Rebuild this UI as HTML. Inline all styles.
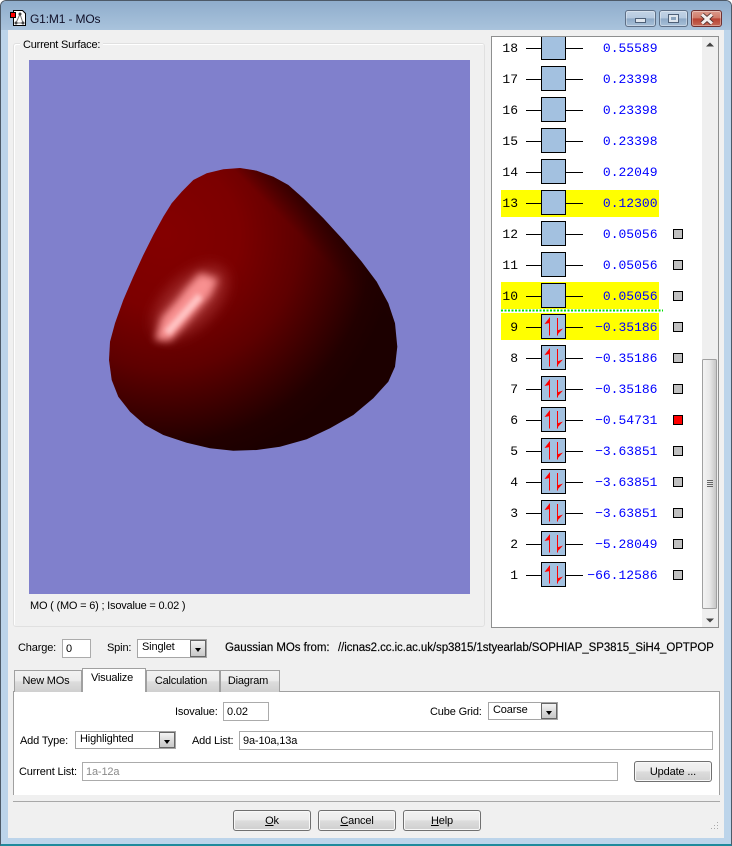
<!DOCTYPE html>
<html><head><meta charset="utf-8"><title>G1:M1 - MOs</title>
<style>
html,body{margin:0;padding:0}
body{width:732px;height:846px;overflow:hidden;position:relative;font:11px "Liberation Sans",sans-serif;letter-spacing:-.15px;color:#000;background:#fff}
.a,.t{position:absolute}
.t{white-space:nowrap;line-height:14px}
.in{position:absolute;box-sizing:border-box;background:#fff;border:1px solid #ababab;padding:2px 0 0 3px;line-height:14px;white-space:nowrap}
.cb{position:absolute;box-sizing:border-box;background:#fff;border:1px solid #a5a5a5;padding:0 0 0 4px;line-height:14px;white-space:nowrap}
.cb i{position:absolute;right:0;top:0;bottom:0;width:16px;background:linear-gradient(#f4f4f4,#dcdcdc 50%,#c8c8c8);border:1px solid #666;box-sizing:border-box}
.cb i:after{content:"";position:absolute;left:3.500px;top:7px;border:3.500px solid transparent;border-top:4px solid #000;border-bottom:0}
.btn{position:absolute;box-sizing:border-box;border:1px solid #707070;border-radius:3px;background:linear-gradient(#f2f2f2,#ebebeb 48%,#dddddd 50%,#cfcfcf);text-align:center;line-height:20px;box-shadow:inset 0 0 0 1px #f8f8f8}
.tab{position:absolute;box-sizing:border-box;border:1px solid #a0a0a0;border-bottom:0;background:linear-gradient(#f2f2f2,#ebebeb 48%,#dddddd 50%,#cfcfcf);text-align:center;line-height:21px;padding-right:4px;letter-spacing:-.2px}
.wb{position:absolute;box-sizing:border-box;border:1px solid #5e6f86;border-radius:3px;top:10px;height:17px;box-shadow:inset 0 0 0 1px rgba(255,255,255,.35);background:linear-gradient(#c2d3e6,#b5c9df 48%,#8ca8c6 50%,#a8c0d8)}
</style></head>
<body>
<!-- frame -->
<div class="a" style="left:0;top:0;width:732px;height:846px;box-sizing:border-box;border:1px solid #4d5a68;border-bottom:2px solid #1f8a9c;border-radius:6px 6px 0 0;background:#bcd4ea"></div>
<div class="a" style="left:1px;top:1px;width:730px;height:29px;border-radius:5px 5px 0 0;background:linear-gradient(#8fadcc,#a9c3dc)"></div>
<!-- client -->
<div class="a" style="left:8px;top:30px;width:716px;height:808px;background:#f0f0f0"></div>
<!-- title icon -->
<svg class="a" style="left:9px;top:9px" width="18" height="18" viewBox="0 0 18 18">
<path d="M4.500 1.500H13.500L16.500 4.500V16.500H4.500Z" fill="#fff" stroke="#000"/>
<path d="M11 5L7 14M11 5L14 14M7 14H14" stroke="#777"/>
<circle cx="11" cy="5" r="1.500" fill="#444"/><circle cx="7" cy="14" r="1.500" fill="#444"/><circle cx="14" cy="14" r="1.500" fill="#444"/>
<rect x="1.500" y="3.500" width="5" height="5" fill="#f00" stroke="#000"/>
</svg>
<div class="t" style="left:30px;top:12px;font-size:12px;color:#101028">G1:M1 - MOs</div>
<!-- window buttons -->
<div class="wb" style="left:625px;width:31px"><div class="a" style="left:9px;top:7px;width:11px;height:5px;background:#dfe6ee;border:1px solid #4e6078;box-sizing:border-box"></div></div>
<div class="wb" style="left:659px;width:29px"><div class="a" style="left:8px;top:3px;width:11px;height:9px;border:1px solid #4e6078;box-sizing:border-box;background:#dfe6ee"><div style="margin:2px;height:3px;background:#8aa3bd"></div></div></div>
<div class="wb" style="left:691px;width:31px;border-color:#6e3030;background:linear-gradient(#dc9a8c,#d07a68 48%,#b84030 50%,#c46a58)">
<svg class="a" style="left:8px;top:2px" width="14" height="12"><path d="M2 1.500L12 10.500M12 1.500L2 10.500" stroke="#4a2a28" stroke-width="4.600"/><path d="M2 1.500L12 10.500M12 1.500L2 10.500" stroke="#f4efee" stroke-width="3"/></svg></div>

<!-- group box -->
<div class="a" style="left:13px;top:43px;width:472px;height:584px;box-sizing:border-box;border:1px solid #e0e0e0;border-radius:3px;box-shadow:inset 1px 1px 0 #fff"></div>
<div class="t" style="left:20px;top:38px;background:#f0f0f0;padding:0 3px;letter-spacing:-.22px">Current Surface:</div>
<!-- 3D -->
<svg class="a" style="left:29px;top:60px" width="441" height="534" viewBox="29 60 441 534">
<defs>
<radialGradient id="g" gradientUnits="userSpaceOnUse" cx="165" cy="235" r="232">
<stop offset="0" stop-color="#840000"/><stop offset=".32" stop-color="#7c0000"/><stop offset=".58" stop-color="#5e0000"/><stop offset=".72" stop-color="#440000"/><stop offset=".9" stop-color="#220000"/><stop offset="1" stop-color="#1c0000"/>
</radialGradient>
<linearGradient id="e" gradientUnits="userSpaceOnUse" x1="272" y1="208" x2="297.500" y2="182.500">
<stop offset="0" stop-color="#200000" stop-opacity="0"/><stop offset="1" stop-color="#200000" stop-opacity=".85"/>
</linearGradient>
<filter id="b1" x="-50%" y="-50%" width="200%" height="200%"><feGaussianBlur stdDeviation="7"/></filter>
<filter id="b2" x="-50%" y="-50%" width="200%" height="200%"><feGaussianBlur stdDeviation="4"/></filter>
<filter id="b3" x="-50%" y="-50%" width="200%" height="200%"><feGaussianBlur stdDeviation="2.500"/></filter>
<clipPath id="c"><polygon points="240,168 223.300,169.300 206.700,173.300 193.300,180 181.700,191.700 171.700,203.300 163.300,216.700 153.300,235 143.300,255 133.300,276.700 123.300,300 115,323.300 110,341.700 109,360 111.700,380 118.300,396.700 130,411.700 145,425 163.300,435 186.700,442.700 210,448.300 233.300,450.700 256.700,450 280,446.700 306.700,439.300 330,428.300 353.300,415 373.300,398.300 388.300,381.700 395,366.700 397.300,346.700 395,323.300 388.300,303.300 376.700,281.700 361.700,261.700 343.300,240 323.300,218.300 303.300,198.300 288.300,185 273.300,176.700 256.700,170.700"/></clipPath>
</defs>
<rect x="29" y="60" width="441" height="534" fill="#8080cc"/>
<g clip-path="url(#c)">
<rect x="100" y="160" width="310" height="300" fill="url(#g)"/>
<rect x="100" y="160" width="310" height="300" fill="url(#e)"/>
<ellipse cx="190" cy="302" rx="46" ry="24" transform="rotate(-44 190 302)" fill="#b84848" opacity=".55" filter="url(#b1)"/>
<polygon points="155,340 162,317 177,300 187,287 200,273 218,279 211,295 198,310 183,327 170,341" fill="#f89090" filter="url(#b2)"/>
<path d="M167 333L200 296" stroke="#ffc4c4" stroke-width="7" filter="url(#b3)"/>
</g>
</svg>
<div class="t" style="left:30px;top:599px;letter-spacing:-.2px">MO ( (MO = 6) ; Isovalue = 0.02 )</div>

<!-- MO list -->
<svg class="a" style="left:491px;top:36px;letter-spacing:0" width="228" height="593" viewBox="491 36 228 593" font-family="Liberation Mono, monospace" font-size="13">
<defs>
<g id="l"><path d="M526 0.500H541M566 0.500H583" stroke="#000"/><rect x="541.500" y="-12.500" width="24" height="24" fill="#a3c1e0" stroke="#000"/></g>
<g id="o"><use href="#l"/><path d="M549.500 -9V8.500M557.500 -9V8.500" stroke="#f00"/><path d="M550 -10L544.500 -3L550 -4ZM557 8L563 1.500L557 3.500Z" fill="#f00"/></g>
<rect id="s" x="673.500" y="-4.500" width="9" height="9" fill="#c0c0c0" stroke="#000"/>
</defs>
<rect x="491.500" y="36.500" width="227" height="591" fill="#fff" stroke="#8e8f8f"/>
<rect x="501" y="190" width="158" height="27" fill="#ff0"/>
<rect x="501" y="282" width="158" height="27" fill="#ff0"/>
<rect x="501" y="313" width="158" height="27" fill="#ff0"/>
<clipPath id="lc"><rect x="492" y="37" width="210" height="590"/></clipPath>
<g clip-path="url(#lc)">
<use href="#l" y="48"/><use href="#l" y="79"/><use href="#l" y="110"/><use href="#l" y="141"/><use href="#l" y="172"/><use href="#l" y="203"/><use href="#l" y="234"/><use href="#l" y="265"/><use href="#l" y="296"/>
<use href="#o" y="327"/><use href="#o" y="358"/><use href="#o" y="389"/><use href="#o" y="420"/><use href="#o" y="451"/><use href="#o" y="482"/><use href="#o" y="513"/><use href="#o" y="544"/><use href="#o" y="575"/>
</g>
<path d="M501 310.500H663" stroke="#00e000" stroke-width="2" stroke-dasharray="2 1.500"/>
<g text-anchor="end" fill="#000">
<text x="518" y="52">18</text><text x="518" y="83">17</text><text x="518" y="114">16</text><text x="518" y="145">15</text><text x="518" y="176">14</text><text x="518" y="207">13</text><text x="518" y="238">12</text><text x="518" y="269">11</text><text x="518" y="300">10</text><text x="518" y="331">9</text><text x="518" y="362">8</text><text x="518" y="393">7</text><text x="518" y="424">6</text><text x="518" y="455">5</text><text x="518" y="486">4</text><text x="518" y="517">3</text><text x="518" y="548">2</text><text x="518" y="579">1</text>
</g>
<g text-anchor="end" fill="#0000ff">
<text x="657.500" y="52">0.55589</text><text x="657.500" y="83">0.23398</text><text x="657.500" y="114">0.23398</text><text x="657.500" y="145">0.23398</text><text x="657.500" y="176">0.22049</text><text x="657.500" y="207">0.12300</text><text x="657.500" y="238">0.05056</text><text x="657.500" y="269">0.05056</text><text x="657.500" y="300">0.05056</text><text x="657.500" y="331">−0.35186</text><text x="657.500" y="362">−0.35186</text><text x="657.500" y="393">−0.35186</text><text x="657.500" y="424">−0.54731</text><text x="657.500" y="455">−3.63851</text><text x="657.500" y="486">−3.63851</text><text x="657.500" y="517">−3.63851</text><text x="657.500" y="548">−5.28049</text><text x="657.500" y="579">−66.12586</text>
</g>
<use href="#s" y="234"/><use href="#s" y="265"/><use href="#s" y="296"/><use href="#s" y="327"/><use href="#s" y="358"/><use href="#s" y="389"/>
<rect x="673.500" y="415.500" width="9" height="9" fill="#f00" stroke="#000"/>
<use href="#s" y="451"/><use href="#s" y="482"/><use href="#s" y="513"/><use href="#s" y="544"/><use href="#s" y="575"/>
<!-- scrollbar -->
<rect x="702" y="37" width="16" height="590" fill="#efefef"/>
<path d="M706 46.500L710 42.500L714 46.500Z" fill="#444"/>
<path d="M706 618.500L714 618.500L710 622.500Z" fill="#444"/>
<linearGradient id="sb"><stop offset="0" stop-color="#f4f4f4"/><stop offset=".5" stop-color="#e8e8e8"/><stop offset="1" stop-color="#c4c4c4"/></linearGradient>
<rect x="702.500" y="359.500" width="14" height="249" fill="url(#sb)" stroke="#a0a0a0" rx="1"/>
<path d="M707 480.500H713M707 482.500H713M707 484.500H713M707 486.500H713" stroke="#666"/>
</svg>

<!-- charge row -->
<div class="t" style="left:18px;top:641px">Charge:</div>
<div class="in" style="left:62px;top:639px;width:29px;height:19px">0</div>
<div class="t" style="left:107px;top:641px">Spin:</div>
<div class="cb" style="left:137px;top:639px;width:70px;height:19px;">Singlet<i></i></div>
<div class="t" style="left:225px;top:641px;font-size:11.500px;-webkit-text-stroke:.15px #000;letter-spacing:-.05px">Gaussian MOs from:</div>
<div class="t" style="left:338px;top:641px;font-size:11.500px;-webkit-text-stroke:.15px #000;letter-spacing:-.08px">//icnas2.cc.ic.ac.uk/sp3815/1styearlab/SOPHIAP_SP3815_SiH4_OPTPOP</div>

<!-- tabs -->
<div class="a" style="left:13px;top:691px;width:707px;height:104px;background:#fff;border:1px solid #a0a0a0;border-bottom:0;box-sizing:border-box"></div>
<div class="tab" style="left:14px;top:670px;width:68px;height:22px">New MOs</div>
<div class="tab" style="left:146px;top:670px;width:74px;height:22px">Calculation</div>
<div class="tab" style="left:220px;top:670px;width:60px;height:22px">Diagram</div>
<div class="tab" style="left:82px;top:668px;width:64px;height:24px;background:#fff;line-height:19px">Visualize</div>

<div class="t" style="left:175px;top:705px">Isovalue:</div>
<div class="in" style="left:223px;top:702px;width:46px;height:19px">0.02</div>
<div class="t" style="left:430px;top:705px">Cube Grid:</div>
<div class="cb" style="left:488px;top:702px;width:70px;height:18px">Coarse<i></i></div>
<div class="t" style="left:20px;top:734px">Add Type:</div>
<div class="cb" style="left:75px;top:731px;width:101px;height:18px">Highlighted<i></i></div>
<div class="t" style="left:192px;top:734px">Add List:</div>
<div class="in" style="left:239px;top:731px;width:474px;height:19px">9a-10a,13a</div>
<div class="t" style="left:19px;top:765px">Current List:</div>
<div class="in" style="left:82px;top:762px;width:536px;height:19px;color:#8a8a8a">1a-12a</div>
<div class="btn" style="left:634px;top:761px;width:78px;height:21px">Update ...</div>

<!-- bottom -->
<div class="a" style="left:13px;top:801px;width:707px;height:1px;background:#a8a8a8"></div>
<div class="btn" style="left:233px;top:810px;width:78px;height:21px"><u>O</u>k</div>
<div class="btn" style="left:318px;top:810px;width:78px;height:21px"><u>C</u>ancel</div>
<div class="btn" style="left:403px;top:810px;width:78px;height:21px"><u>H</u>elp</div>
<svg class="a" style="left:708px;top:820px" width="12" height="12"><path d="M9 2h1v1H9zM6 5h1v1H6zM9 5h1v1H9zM3 8h1v1H3zM6 8h1v1H6zM9 8h1v1H9z" fill="#aaa"/></svg>
</body></html>
